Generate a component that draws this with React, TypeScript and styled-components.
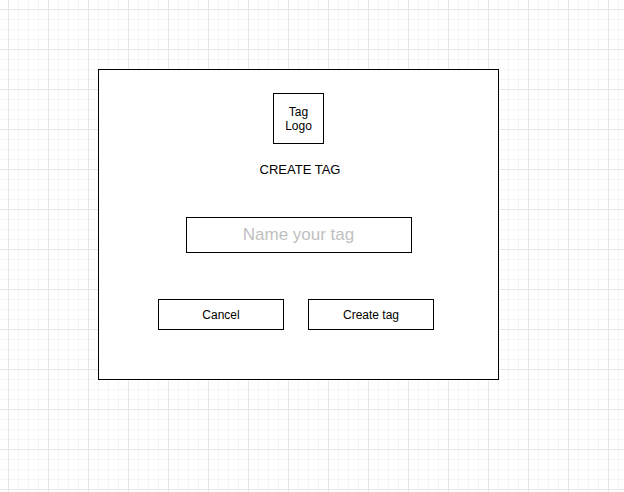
import styled, {createGlobalStyle} from 'styled-components';

const GlobalStyle = createGlobalStyle`
  html, body {
    margin: 0;
    padding: 0;
  }

  body {
    font-family: 'Liberation Sans', Arial, Helvetica, sans-serif;
    background-color: #ffffff;
    background-image:
      linear-gradient(to right, #e6e6e6 1px, transparent 1px),
      linear-gradient(to bottom, #e6e6e6 1px, transparent 1px),
      linear-gradient(to right, #f5f5f5 1px, transparent 1px),
      linear-gradient(to bottom, #f5f5f5 1px, transparent 1px);
    background-size: 40px 40px, 40px 40px, 10px 10px, 10px 10px;
    background-position: 8px 9px, 8px 9px, 8px 9px, 8px 9px;
  }
`;

const CreateTagDialog = () => {
  return (
    <Canvas>
      <Dialog>
        <LogoBox>
          Tag
          <br />
          Logo
        </LogoBox>
        <Title>CREATE TAG</Title>
        <TagInput type="text" placeholder="Name your tag" />
        <ButtonRow>
          <ActionButton type="button">Cancel</ActionButton>
          <ActionButton type="button">Create tag</ActionButton>
        </ButtonRow>
      </Dialog>
    </Canvas>
  );
};

const App = () => (
  <>
    <GlobalStyle />
    <CreateTagDialog />
  </>
);

const Canvas = styled.div`
  width: 624px;
  height: 492px;
  box-sizing: border-box;
  padding: 69px 0 0 98px;
`;

const Dialog = styled.div`
  width: 401px;
  height: 311px;
  box-sizing: border-box;
  border: 1px solid #000;
  background: #fff;
  padding-top: 23px;

  display: flex;
  flex-direction: column;
  align-items: center;
`;

const LogoBox = styled.div`
  width: 51px;
  height: 51px;
  box-sizing: border-box;
  border: 1px solid #000;

  display: flex;
  align-items: center;
  justify-content: center;
  text-align: center;

  font-size: 12px;
  line-height: 14px;
  color: #000;
`;

const Title = styled.div`
  margin-top: 18px;
  margin-left: 3px;
  font-size: 13px;
  line-height: 15px;
  color: #000;
`;

const TagInput = styled.input`
  margin-top: 40px;
  width: 226px;
  height: 36px;
  box-sizing: border-box;
  border: 1px solid #000;
  border-radius: 0;
  background: #fff;
  padding: 0 6px;
  outline: none;

  font-family: 'Liberation Sans', Arial, Helvetica, sans-serif;
  font-size: 17px;
  text-align: center;
  color: #000;

  &::placeholder {
    color: #bfbfbf;
    opacity: 1;
  }
`;

const ButtonRow = styled.div`
  margin-top: 46px;
  margin-right: 5px;
  display: flex;
  gap: 24px;
`;

const ActionButton = styled.button`
  width: 126px;
  height: 31px;
  box-sizing: border-box;
  border: 1px solid #000;
  border-radius: 0;
  background: #fff;
  padding: 0;

  font-family: 'Liberation Sans', Arial, Helvetica, sans-serif;
  font-size: 12px;
  color: #000;
  cursor: pointer;
`;

export default App;
